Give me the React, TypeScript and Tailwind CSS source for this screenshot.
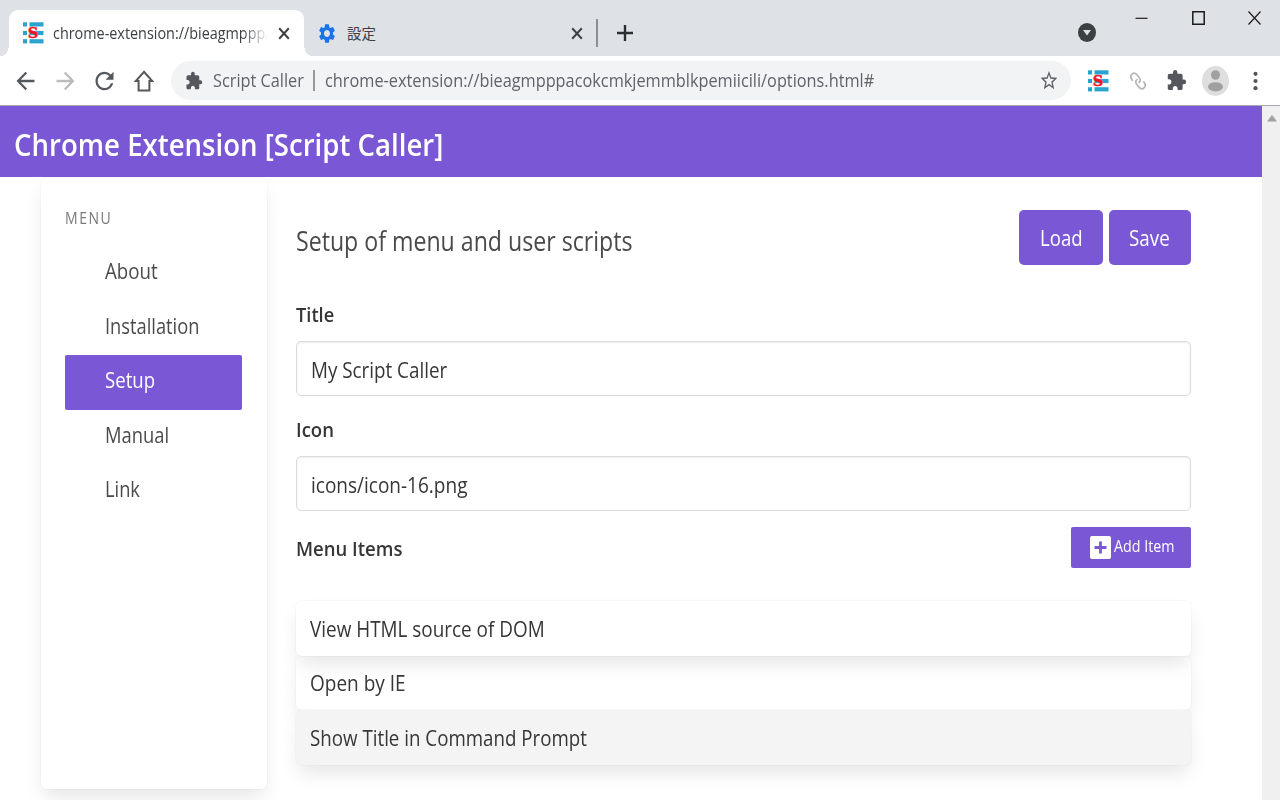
import type { ReactNode } from "react";
import { MdArrowBack, MdArrowForward, MdExtension, MdRefresh, MdSettings, MdStarBorder } from "react-icons/md";

function Label({ className = "", children }: { className?: string; children: ReactNode }) {
  return <span className={`block origin-left whitespace-nowrap ${className}`}>{children}</span>;
}

function ScriptLogo({ className = "" }: { className?: string }) {
  return (
    <svg viewBox="0 0 21 22" preserveAspectRatio="none" className={`h-[22px] w-[21px] shrink-0 ${className}`}>
      <g fill="#2ba3cf">
        <rect x="0" y="0.3" width="4" height="4.2" />
        <rect x="6.500" y="0.3" width="14" height="4.2" />
        <rect x="0" y="8.9" width="4" height="4.2" />
        <rect x="6.500" y="8.9" width="14" height="4.2" />
        <rect x="0" y="17.2" width="4" height="4.2" />
        <rect x="6.500" y="17.2" width="14" height="4.2" />
      </g>
      <text x="10" y="16.400" textAnchor="middle" fontFamily="DejaVu Serif, serif" fontWeight="700" fontSize="14.500" fill="#f5141e" stroke="#f5141e" strokeWidth="0.5">
        S
      </text>
    </svg>
  );
}

function Cross({ className = "" }: { className?: string }) {
  return (
    <svg viewBox="0 0 12 12" className={`shrink-0 ${className}`} preserveAspectRatio="none">
      <path d="M1.2 1.2 10.8 10.8M10.8 1.2 1.2 10.8" stroke="currentColor" strokeWidth="2" fill="none" />
    </svg>
  );
}

function TabStrip() {
  return (
    <div className="flex h-14 shrink-0 bg-[#dee1e6] text-[#3c4043]">
      <div className="relative mt-[10px] ml-[9px] flex h-[46px] w-[295px] items-center rounded-t-[9px] bg-white">
        <span className="absolute bottom-0 -left-2 h-3 w-2 bg-[radial-gradient(ellipse_at_top_left,transparent_70%,white_71%)]" />
        <span className="absolute -right-2 bottom-0 h-3 w-2 bg-[radial-gradient(ellipse_at_top_right,transparent_70%,white_71%)]" />
        <ScriptLogo className="ml-[14px]" />
        <div className="ml-[9px] w-[215px] [mask-image:linear-gradient(to_right,black_88%,transparent)]">
          <Label className="scale-x-[0.872] text-[16.5px] leading-6">chrome-extension://bieagmpppa</Label>
        </div>
        <Cross className="ml-[10px] h-[13px] w-[12px]" />
      </div>
      <div className="flex items-center pt-[10px] pl-[13px]">
        <MdSettings preserveAspectRatio="none" className="h-[23px] w-5 text-[#1a73e8]" />
        <Label className="ml-[10px] w-[30px] font-['Noto_Sans_CJK_JP',sans-serif] text-[14.5px]">設定</Label>
        <Cross className="ml-[194px] h-[13px] w-[12px]" />
        <span className="ml-[13px] h-7 w-[1.5px] bg-[#8b8e92]" />
        <svg viewBox="0 0 16 16" className="ml-[19px] h-4 w-4" preserveAspectRatio="none">
          <path d="M8 0v16M0 8h16" stroke="#2b2e31" strokeWidth="2.4" />
        </svg>
      </div>
      <div className="flex-1" />
      <svg viewBox="0 0 18 19" className="mt-[23px] mr-[39px] h-[19px] w-[18px]">
        <ellipse cx="9" cy="9.5" rx="9" ry="9.5" fill="#3c4043" />
        <path d="M5 7h8l-4 5.5z" fill="#dee1e6" />
      </svg>
      <div className="flex pr-[19px] text-[#1c1c1c]">
        <svg viewBox="0 0 13 14" className="mt-[11px] mr-[44px] h-[14px] w-[13px]">
          <path d="M.5 7.3h12" stroke="currentColor" strokeWidth="1.2" />
        </svg>
        <svg viewBox="0 0 13 14" className="mt-[11px] mr-[43px] h-[14px] w-[13px]">
          <path d="M.8.8h11.4v12.4H.8z" stroke="currentColor" strokeWidth="1.5" fill="none" />
        </svg>
        <svg viewBox="0 0 13 14" className="mt-[11px] h-[14px] w-[13px]">
          <path d="M.5.5l12 13M12.5.5l-12 13" stroke="currentColor" strokeWidth="1.2" />
        </svg>
      </div>
    </div>
  );
}

function Toolbar() {
  return (
    <div className="flex h-[50px] shrink-0 items-center border-b border-[#a9a5b5] bg-white text-[#54585d]">
      <MdArrowBack preserveAspectRatio="none" className="ml-[12px] h-[28px] w-[27px] shrink-0" />
      <MdArrowForward preserveAspectRatio="none" className="ml-[13px] h-[28px] w-[27px] shrink-0 text-[#b9bbbd]" />
      <MdRefresh preserveAspectRatio="none" className="ml-[12px] h-[28px] w-[27px] shrink-0" />
      <svg viewBox="0 0 20 22" className="ml-[16px] h-[22px] w-5 shrink-0">
        <path d="M10 1.8 1.8 11h2.8v9.6h10.8V11h2.8z" fill="none" stroke="currentColor" strokeWidth="2" />
      </svg>
      <div className="ml-[17px] flex h-[39px] w-[900px] shrink-0 items-center rounded-full bg-[#f1f3f4] text-[#606469]">
        <MdExtension preserveAspectRatio="none" className="ml-[14px] h-[20px] w-[18px] shrink-0 text-[#54585d]" />
        <Label className="ml-[10px] w-[100px] scale-x-[0.905] text-[18px]">Script Caller</Label>
        <span className="h-[21px] w-[1.5px] bg-[#97999c]" />
        <Label className="ml-[10px] w-[713px] scale-x-[0.906] text-[18px]">
          chrome-extension://bieagmpppacokcmkjemmblkpemiicili/options.html#
        </Label>
        <MdStarBorder preserveAspectRatio="none" className="ml-px h-[23px] w-5 shrink-0" />
      </div>
      <ScriptLogo className="ml-[17px]" />
      <svg viewBox="0 0 16 18" className="ml-[21px] h-[18px] w-4 shrink-0" fill="none" stroke="#b4b6b8" strokeWidth="1.7" strokeLinecap="round">
        <path d="M2.3 8.2C.3 5.8.4 3.8 2 2.2s3.500-1.100 4.800.4l2.500 3.200c1.300 1.700 1 3.500-.2 4.500" />
        <path d="M13.700 9.800c2 2.400 1.900 4.400.3 6s-3.500 1.100-4.800-.4l-2.500-3.200c-1.300-1.700-1-3.500.2-4.500" />
      </svg>
      <MdExtension preserveAspectRatio="none" className="ml-[20px] h-[23px] w-[21px] shrink-0" />
      <svg viewBox="0 0 27 30" className="ml-[15px] h-[30px] w-[27px] shrink-0">
        <ellipse cx="13.500" cy="15" rx="13.500" ry="15" fill="#dedede" />
        <ellipse cx="13.500" cy="9" rx="4.500" ry="4.800" fill="#a0a0a0" />
        <ellipse cx="13.500" cy="20.800" rx="7.500" ry="4.600" fill="#a0a0a0" />
      </svg>
      <svg viewBox="0 0 5 20" className="ml-[24px] h-5 w-[5px] shrink-0" fill="#54585d">
        <circle cx="2.500" cy="2.800" r="2.100" />
        <circle cx="2.500" cy="10" r="2.100" />
        <circle cx="2.500" cy="17.200" r="2.100" />
      </svg>
    </div>
  );
}

const cardShadow = "shadow-[0_11px_20px_-3px_rgba(10,10,10,0.1),0_0_0_1px_rgba(10,10,10,0.02)]";

function Sidebar() {
  return (
    <aside className={`mt-px ml-[41px] h-[611px] w-[226px] shrink-0 rounded-[6px] bg-white px-6 pt-[28px] text-[#4a4a4a] ${cardShadow}`}>
      <Label className="mb-[15px] scale-x-[0.85] text-[16.5px] leading-6 tracking-[1.8px] text-[#7a7a7a]">MENU</Label>
      <ul className="mr-[1px] text-[21px] leading-[52px]">
        <li className="h-[55px] pl-10"><Label className="scale-x-[0.89]">About</Label></li>
        <li className="h-[55px] pl-10"><Label className="scale-x-[0.87]">Installation</Label></li>
        <li className="h-[55px] rounded-[2px] bg-[#7957d5] pl-10 leading-[51px] text-white"><Label className="scale-x-[0.885]">Setup</Label></li>
        <li className="h-[55px] pl-10 leading-[50px]"><Label className="scale-x-[0.875]">Manual</Label></li>
        <li className="h-[55px] pl-10 leading-[49px]"><Label className="scale-x-[0.87]">Link</Label></li>
      </ul>
    </aside>
  );
}

function Setup() {
  const input = "flex h-[55px] items-center rounded-[5px] border border-[#dbdbdb] pt-[5px] pl-[14px] text-[21px] shadow-[inset_0_1px_2px_rgba(10,10,10,0.08)]";
  const item = "flex h-[54.7px] items-center rounded-[6px] pt-[2px] pl-[14px] text-[21px]";
  return (
    <main className="ml-[29px] w-[895px] pt-[33px] text-[#363636]">
      <div className="flex h-[55px] gap-[6px] text-[21px] text-white">
        <Label className="flex-1 scale-x-[0.857] pt-[10px] text-[27px] leading-[42px] text-[#4a4a4a]">Setup of menu and user scripts</Label>
        <button className="h-[55px] w-[84px] rounded-[5px] bg-[#7957d5] pt-[2px] pl-[21px] text-left"><Label className="scale-x-[0.885]">Load</Label></button>
        <button className="h-[55px] w-[82px] rounded-[5px] bg-[#7957d5] pt-[2px] pl-[20px] text-left"><Label className="scale-x-[0.895]">Save</Label></button>
      </div>
      <Label className="mt-[34px] mb-[12px] scale-x-[0.89] text-[20.500px] leading-[30px] font-semibold">Title</Label>
      <div className={input}><Label className="scale-x-[0.896]">My Script Caller</Label></div>
      <Label className="mt-[18px] mb-[12px] scale-x-[0.905] text-[20.500px] leading-[30px] font-semibold">Icon</Label>
      <div className={input}><Label className="scale-x-[0.905]">icons/icon-16.png</Label></div>
      <div className="mt-4 flex h-[41px] items-center justify-between">
        <Label className="scale-x-[0.904] text-[20.500px] leading-[30px] font-semibold">Menu Items</Label>
        <button className="flex h-[41px] w-[120px] items-center rounded-[2px] bg-[#7957d5] pl-[19px] text-[17px] text-white">
          <svg viewBox="0 0 21 23" className="h-[23px] w-[21px] shrink-0">
            <rect width="21" height="23" rx="2" fill="#fff" />
            <path d="M10.500 5.500v12M4.500 11.500h12" stroke="#7957d5" strokeWidth="2.800" />
          </svg>
          <Label className="ml-[3px] scale-x-[0.84] pb-[3px]">Add Item</Label>
        </button>
      </div>
      <div className="mt-[33px]">
        <div className={`relative z-10 bg-white ${item} ${cardShadow}`}><Label className="scale-x-[0.9]">View HTML source of DOM</Label></div>
        <div className={`${item} ${cardShadow}`}><Label className="scale-x-[0.905]">Open by IE</Label></div>
        <div className={`bg-[#f4f4f4] ${item} ${cardShadow}`}><Label className="scale-x-[0.892]">Show Title in Command Prompt</Label></div>
      </div>
    </main>
  );
}

export default function App() {
  return (
    <div className="flex h-[800px] w-[1280px] flex-col overflow-hidden bg-white font-['Open_Sans','Noto_Sans_CJK_JP',sans-serif]">
      <TabStrip />
      <Toolbar />
      <div className="flex min-h-0 flex-1">
        <div className="flex min-w-0 flex-1 flex-col">
          <header className="flex h-[71px] shrink-0 items-center bg-[#7957d5] pt-[4px] pl-[14px] text-white">
            <Label className="scale-x-[0.89] text-[31px] leading-[46px] font-semibold">Chrome Extension [Script Caller]</Label>
          </header>
          <div className="flex min-h-0 flex-1">
            <Sidebar />
            <Setup />
          </div>
        </div>
        <div className="flex w-[18px] justify-center bg-[#f0f0f0] pt-[9px]">
          <svg viewBox="0 0 10 7" className="ml-[2px] h-[7px] w-[10px]">
            <path d="M5 0l5 6.500H0z" fill="#a0a0a0" />
          </svg>
        </div>
      </div>
    </div>
  );
}
